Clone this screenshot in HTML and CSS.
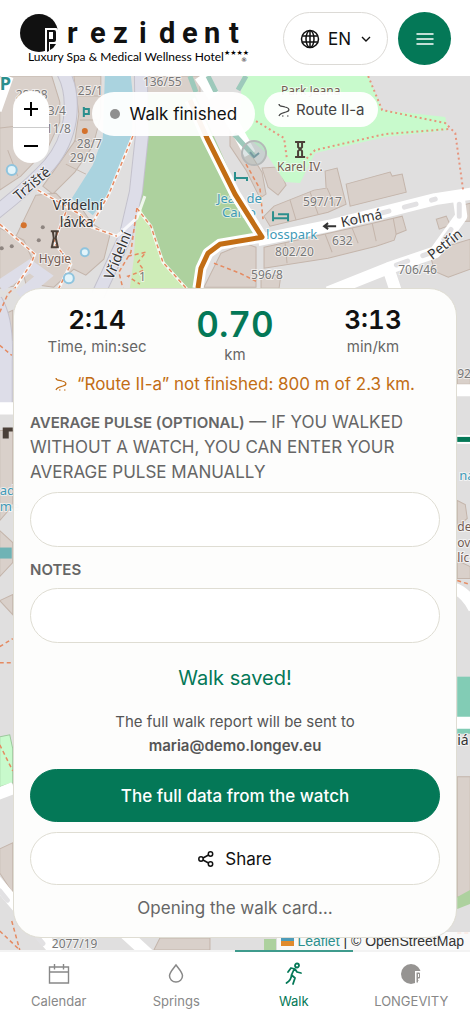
FILE: index.html
```html
<!DOCTYPE html>
<html lang="en">
<head>
    <meta charset="UTF-8">
    <meta name="viewport" content="width=device-width, initial-scale=1.0">
    <title>Prezident - Walk</title>
    <link rel="stylesheet" href="styles.css">
</head>
<body>
    <header class="header">
        <a class="logo" href="#" aria-label="Prezident">
            <svg width="230" height="53" viewBox="0 0 230 53">
                <circle cx="19" cy="21" r="19" fill="#111"/>
                <path d="M25 16h11q2 0 2 2v14h-8v7h-5z" fill="#fff"/>
                <path d="M27 18h7q2 0 2 2v8q0 2-2 2h-5v9l-2 1z" fill="#111"/>
                <path d="M29 20h4v7h-4z" fill="#fff"/>
                <path d="M30 32h6q-2 4-6 6z" fill="#111"/>
                <text class="logo-name" x="47 70 93 119 139 162 184 209" y="31">rezident</text>
                <text class="logo-sub" x="8" y="49">Luxury Spa &amp; Medical Wellness Hotel</text>
                <text class="logo-stars" x="204" y="43">★★★★</text>
                <text class="logo-reg" x="221" y="50">®</text>
            </svg>
        </a>
        <div class="header-actions">
            <button class="lang" type="button">
                <svg width="20" height="20" viewBox="0 0 20 20" fill="none" stroke="#111" stroke-width="1.5">
                    <circle cx="10" cy="10" r="8.5"/>
                    <ellipse cx="10" cy="10" rx="4" ry="8.5"/>
                    <path d="M2.2 7h15.6M2.2 13h15.6M10 1.500v17"/>
                </svg>
                <span>EN</span>
                <svg width="10" height="10" viewBox="0 0 10 10" fill="none" stroke="#111" stroke-width="1.400"><path d="M1 3l4 4 4-4"/></svg>
            </button>
            <button class="menu" type="button" aria-label="Menu">
                <svg width="18" height="14" viewBox="0 0 18 14" stroke="#fff" stroke-width="1.500" stroke-linecap="round"><path d="M1 2h16M1 7h16M1 12h16"/></svg>
            </button>
        </div>
    </header>

    <main class="walk">
        <svg class="map" viewBox="0 76 470 873" preserveAspectRatio="xMidYMin slice" aria-hidden="true">
            <rect x="0" y="76" width="470" height="873" fill="#e0dfdf"/>

            <!-- buildings -->
            <g fill="#d9d0ca" stroke="#c4b5ab" stroke-width="1">
                <path d="M0 76h52l8 26 0 20-12 26-27 28-21 14z"/>
                <path d="M0 128l18-2M18 176l-10-26"/>
                <path d="M74 76h27v40l-8 30-18 26-22 22-10-8 18-25 14-20 4-27z"/>
                <path d="M78 96h22M80 120h18M74 141h20M66 164l20 10M140 76h60v18h-52z"/>
                <path d="M36 195l20-2 12 12 10-2 14 20 18 12-6 24-18 16-12-6-20 18-28-4-6-24-8-14z"/>
                <path d="M0 228l24 12 8 18-18 28-14 2z"/>
                <path d="M142 272l14-6 20 22h-40zM221 253l24-10 11 4v40h-52z"/>
                <path d="M230 130l18 20 14 22 4 22-6 4-14-28-16-24zM262 168l16-1 8 18-8 10-10-8z"/>
                <path d="M264 216l10-10 40-16 12-2-1-17 12-3 9 36-18 8-58 14z"/>
                <path d="M290 200l6 20M310 192l8 22M327 188l8 18"/>
                <path d="M346 184l44-12 2 4 10-2 4 18-56 14z"/>
                <path d="M264 247l60-13 40-9 38-9 4 14-10 4-2 6-12 4-6 2-48 12-64 10z"/>
                <path d="M285 243l2 20M325 234l7 18M352 228l6 15M372 223l4 18M393 218l3 16"/>
                <path d="M436 219l10-3 4 9-11 4zM430 254l20-9 20-6v30l-22 8-14-6zM462 205l8-2v18h-8z"/>
                <path d="M261 278l20-4-2 14h-18z"/>
                <path d="M0 316l13-6v30H0zM0 430h13v75l-13 15z"/>
                <path d="M0 530l13 12v20L0 576zM0 848l13-6v50L0 872z"/>
                <path d="M457 370h13v14h-13zM457 500l8 4 2 14-10 8zM457 560l13 6v12h-13z"/>
                <path d="M457 776h13v120h-13zM0 600l13-6v20zM160 937h50v12h-56z"/>
            </g>

            <!-- greens and water -->
            <path d="M242 76h126l14 34 63 7 3 13-63 7-70 16-15 30-15-1-20-30-26-22z" fill="#c8facc"/>
            <path d="M137 205l16 8 12 40 25 35h-60l4-30z" fill="#ceecb8"/>
            <path d="M148 94h47l43 96 22 45-40 9-14 10-8 34h-10l-22-24-27-60z" fill="#add19e"/>
            <path d="M105 76h26l2 19-1 40-22 57-17 23-21-17 21-33 10-28z" fill="#aad3df"/>
            <path d="M0 736l10-2 3 14v34l-13 4z" fill="#c8facc" stroke="#9cc79c"/>
            <path d="M0 547h12v11H0z" fill="#6fb3b5"/>
            <path d="M457 676h13v57h-13z" fill="#82ccb5"/>
            <path d="M457 896l13-7v14l-13 5zM264 938h12v11h-12z" fill="#add19e"/>

            <!-- pedestrian streets -->
            <g fill="none" stroke="#c3c1cc" stroke-width="14">
                <path d="M62 70q12 20 8 50-4 25-20 44-20 22-56 50"/>
                <path d="M141 76l1 60-6 56-10 43-28 60"/>
                <path d="M-4 300q12 20 10 60v46"/>
            </g>
            <g fill="none" stroke="#dddde8" stroke-width="12">
                <path d="M62 70q12 20 8 50-4 25-20 44-20 22-56 50"/>
                <path d="M141 76l1 60-6 56-10 43-28 60"/>
                <path d="M-4 300q12 20 10 60v46M0 286l30-20 14 10-24 20"/>
            </g>

            <!-- roads -->
            <g fill="none" stroke="#fff" stroke-width="12" stroke-linejoin="round">
                <path d="M258 240l74-15 103-26 40-6M458 194l3 22-26 36-47 16-60 24M388 268l8 24"/>
                <path d="M-4 408h20M454 390h20M454 588q12 4 20 20M454 722h20M-4 794l18-7M-4 880l64 76M125 932l24 22"/>
                <path d="M200 76l14 20M226 110l24 44M8 76l-12 34"/>
            </g>
            <g fill="none" stroke="#e2e1e3" stroke-width="5" stroke-linecap="round" stroke-dasharray="12 16">
                <path d="M350 221l85-22M459 204v14l-24 33-45 16M0 890l46 56"/>
            </g>
            <g fill="none" stroke="#9dc9bb" stroke-width="5"><path d="M190 76l6 16M208 76l8 16M246 76l-8 14M234 134l20 22"/></g>

            <!-- footpaths -->
            <g fill="none" stroke="#fff" stroke-width="3" opacity=".8">
                <path d="M133 136l-24 58-18 32M38 190l42 24 12 13 25 9 20-18 8-22M0 224l35 30-4 10-16 24M66 212l-12 30 17 22-12 24M137 208l14 18 12 36 25 28"/>
            </g>
            <g fill="none" stroke="#e58a61" stroke-width="1.500" stroke-dasharray="4 3">
                <path d="M133 136l-24 58-18 32M38 190l42 24 12 13 25 9M0 224l35 30-4 10-16 24M66 212l-12 30 17 22-12 24M137 208l14 18 12 36 25 28"/>
                <path d="M137 208l-6 44-12 20 4 16M128 256l18-4-8 10 6 8-16 6 12 8M214 263l26 10 16 8M246 164l14 25 3 30"/>
                <path d="M0 312l8-18 6-6M0 345l12 10M0 646l13-8M0 662h13M0 744l13 26M12 920l8 29M0 930l20 19M457 580l13 4M457 932h13"/>
            </g>
            <g fill="none" stroke="#e7957e" stroke-width="2" stroke-dasharray="2 3">
                <path d="M368 76l14 34 63 13 10 10 8 58M448 129l-63 5-70 16-10 10M256 121l28 17 3 22"/>
            </g>

            <!-- points of interest -->
            <g fill="#e3f4fa" stroke="#8fc4de" stroke-width="2"><circle cx="12" cy="170" r="5"/><circle cx="85" cy="252" r="4"/><circle cx="69" cy="278" r="5"/></g>
            <g fill="#d4722c"><circle cx="85" cy="131" r="3"/><circle cx="24" cy="225" r="3"/></g>
            <g fill="#8e8580"><circle cx="43" cy="227" r="2"/><circle cx="39" cy="240" r="2"/><circle cx="12" cy="246" r="2"/><circle cx="2" cy="248" r="2"/></g>
            <g fill="none" stroke="#2b8f8d" stroke-width="2">
                <path d="M84 107v10M84 114h5v-5h-5M273 211v10M273 218h15v3M278 214h10v4M235 172v9M235 178h12v3"/>
            </g>
            <g fill="none" stroke="#4b4038" stroke-width="2">
                <path d="M295 142h10M295 157h10M298 142v5l4 4v6M302 142v5l-4 4v6M51 231h8M51 247h8M53 231l1 7-2 9M57 231l-1 7 2 9"/>
            </g>
            <path d="M3 427h10v4H9v7H3z" fill="#4b4038"/>

            <g class="map-num">
                <text x="16" y="99">28/38</text><text x="48" y="115">3/4</text><text x="46" y="133">11/8</text>
                <text x="78" y="95">25/1</text><text x="77" y="148">28/7</text><text x="70" y="162">29/9</text>
                <text x="143" y="86">136/55</text>
                <text x="303" y="206">597/17</text><text x="332" y="245">632</text><text x="275" y="256">802/20</text>
                <text x="251" y="279">596/8</text><text x="398" y="274">706/46</text><text x="52" y="947">2077/19</text>
                <text x="457" y="378">924</text><text x="139" y="281">1</text>
            </g>
            <g class="map-label">
                <text x="53" y="210">Vřídelní</text><text x="60" y="227">lávka</text>
                <text transform="translate(19 201) rotate(-40)">Tržiště</text>
                <text transform="translate(113 280) rotate(-68)">Vřídelní</text>
                <text transform="translate(342 227) rotate(-12)">Kolmá</text>
                <text transform="translate(432 260) rotate(-38)">Petřín</text>
                <text x="457" y="744">iá</text>
            </g>
            <path d="M324 226h12M328 223l-4 3 4 3" fill="none" stroke="#333" stroke-width="2"/>
            <g class="map-poi">
                <text x="39" y="263">Hygie</text><text x="277" y="171">Karel IV.</text><text x="281" y="95">Park Jeana</text>
                <text x="457" y="530">de</text><text x="457" y="546">ov</text><text x="457" y="561">líc</text>
            </g>
            <g class="map-blue">
                <text x="217" y="203">Jean de</text><text x="222" y="217">Carro</text><text x="266" y="239">losspark</text>
                <text x="459" y="480">na</text><text x="0" y="495">ad</text><text x="0" y="511">me</text>
            </g>
            <text class="map-parking" x="0" y="90">P</text>

            <!-- walked track -->
            <path d="M190 100l17 38 28 56 27 43-42 7-12 9-7 15-3 20" fill="none" stroke="#fff" stroke-width="11" stroke-linejoin="round"/>
            <path d="M190 100l17 38 28 56 27 43-42 7-12 9-7 15-3 20" fill="none" stroke="#c26d14" stroke-width="5" stroke-linejoin="round"/>
            <path d="M457 439h13" stroke="#fff" stroke-width="9"/>
            <path d="M457 439h13" stroke="#047857" stroke-width="5"/>
            <circle cx="254" cy="153" r="12" fill="#9eb5b5" fill-opacity=".35" stroke="#b5b8b8" stroke-width="2"/>
            <path d="M250 152l4 5 5-4" fill="none" stroke="#7899a1" stroke-width="2"/>
        </svg>

        <div class="zoom">
            <button type="button" aria-label="Zoom in"><svg width="16" height="16" viewBox="0 0 16 16" stroke="#000" stroke-width="2"><path d="M1 8h14M8 1v14"/></svg></button>
            <button type="button" aria-label="Zoom out"><svg width="16" height="16" viewBox="0 0 16 16" stroke="#000" stroke-width="2"><path d="M1 8h14"/></svg></button>
        </div>
        <div class="chips">
            <div class="chip chip-state"><span class="dot"></span>Walk finished</div>
            <div class="chip chip-route">
                <svg width="12" height="14" viewBox="0 0 12 14" fill="none" stroke="currentColor" stroke-width="1.200"><path d="M1 1c0 3 3 2 6 3 5 1 5 4 1 5-3 1-6 1-7 4M4 13h1.500M9 13h1.500"/></svg>
                Route II-a
            </div>
        </div>
        <div class="attribution">
            <svg width="13" height="8" viewBox="0 0 13 8"><path fill="#4c9bb8" d="M0 0h13v4H0z"/><path fill="#e08a2c" d="M0 3h13v5H0z"/></svg>
            <a href="#">Leaflet</a> | © OpenStreetMap
        </div>

        <section class="card">
            <div class="stats">
                <div class="stat"><strong>2:14</strong><span>Time, min:sec</span></div>
                <div class="stat stat-main"><strong>0.70</strong><span>km</span></div>
                <div class="stat"><strong>3:13</strong><span>min/km</span></div>
            </div>
            <p class="warning">
                <svg width="12" height="14" viewBox="0 0 12 14" fill="none" stroke="currentColor" stroke-width="1.200"><path d="M1 1c0 3 3 2 6 3 5 1 5 4 1 5-3 1-6 1-7 4M4 13h1.500M9 13h1.500"/></svg>
                “Route II-a” not finished: 800 m of 2.3 km.
            </p>
            <form class="form">
                <label for="pulse"><b>Average pulse (optional)</b> — if you walked without a watch, you can enter your average pulse manually</label>
                <input type="text" id="pulse" inputmode="numeric">
                <label for="notes" class="label-notes"><b>Notes</b></label>
                <input type="text" id="notes">
            </form>
            <p class="saved">Walk saved!</p>
            <p class="report">The full walk report will be sent to<br><b>maria@demo.longev.eu</b></p>
            <button class="btn btn-primary" type="button">The full data from the watch</button>
            <button class="btn" type="button">
                <svg width="16" height="16" viewBox="0 0 16 16" fill="none" stroke="#111" stroke-width="1.500"><circle cx="3" cy="8" r="2.200"/><circle cx="12.500" cy="3" r="2.200"/><circle cx="12.500" cy="13" r="2.200"/><path d="M5 7l5.500-3M5 9l5.500 3"/></svg>
                Share
            </button>
            <p class="opening">Opening the walk card…</p>
        </section>
    </main>

    <nav class="tabs">
        <a href="#">
            <svg width="24" height="24" viewBox="0 0 24 24" fill="none" stroke="currentColor" stroke-width="1.400"><path d="M2.500 5h19v16h-19zM2.500 10h19M7.500 2v5.500M16.500 2v5.500"/></svg>
            Calendar
        </a>
        <a href="#">
            <svg width="24" height="24" viewBox="0 0 24 24" fill="none" stroke="currentColor" stroke-width="1.500"><path d="M12 3c-3 4-6.500 7.500-6.500 10.800a6.500 6.200 0 0 0 13 0C18.500 10.500 15 7 12 3z"/></svg>
            Springs
        </a>
        <a class="active" href="#">
            <svg width="24" height="24" viewBox="0 0 24 24" fill="none" stroke="currentColor" stroke-width="1.800" stroke-linecap="round" stroke-linejoin="round"><circle cx="15" cy="3.500" r="2"/><path d="M6 10l3-4 4 1 2 3 4 1M12 7.500L9.500 13l3.500 3-2 6M9.500 13c0 3-2 6-5 8"/></svg>
            Walk
        </a>
        <a href="#">
            <svg width="24" height="24" viewBox="0 0 24 24"><circle cx="12" cy="12" r="10" fill="#969492"/><path d="M16 9h6v9h-3v5h-3z" fill="#fff"/><path d="M17.500 10.500H20q1 0 1 1v4q0 1-1 1h-1v4h-1.500z" fill="#969492"/><path d="M19 12h1v3h-1z" fill="#fff"/></svg>
            LONGEVITY
        </a>
    </nav>
</body>
</html>
```
FILE: styles.css
```css
* {
    box-sizing: border-box;
}
body {
    font-family: Inter, sans-serif;
    background-color: #fff;
    color: #111;
    margin: 0;
    display: flex;
    flex-direction: column;
    min-height: 100vh;
}
button {
    font-family: inherit;
    color: inherit;
    padding: 0;
    border: none;
    cursor: pointer;
}
a {
    text-decoration: none;
}
p {
    margin: 0;
}
.header {
    display: flex;
    justify-content: space-between;
    align-items: center;
    padding: 12px 19px 11px 20px;
}
.logo svg {
    display: block;
}
.logo-name {
    font: 700 29px Roboto, sans-serif;
    fill: #111;
}
.logo-sub {
    font: 12px Lato, sans-serif;
}
.logo-stars {
    font: 7px "DejaVu Sans", sans-serif;
}
.logo-reg {
    font: 6px "DejaVu Sans", sans-serif;
}
.header-actions {
    display: flex;
    gap: 10px;
}
.lang {
    display: flex;
    align-items: center;
    justify-content: center;
    gap: 8px;
    width: 105px;
    height: 53px;
    font-size: 17px;
    background: #fff;
    border: 1px solid #dcdad6;
    border-radius: 27px;
}
.lang span {
    margin-right: 2px;
}
.menu {
    display: flex;
    align-items: center;
    justify-content: center;
    width: 53px;
    height: 53px;
    background-color: #047857;
    border-radius: 50%;
}

/* map */
.walk {
    position: relative;
    flex: 1;
    overflow: hidden;
    padding: 212px 13px 12px;
}
.map {
    position: absolute;
    top: 0;
    left: 0;
    width: 100%;
    height: 100%;
}
.map text {
    font-family: "Noto Sans", sans-serif;
    stroke: rgba(255, 255, 255, 0.6);
    stroke-width: 2px;
    paint-order: stroke;
}
.map-num {
    font-size: 12px;
    fill: #777;
}
.map-label {
    font-size: 14px;
    fill: #333;
}
.map-poi {
    font-size: 12px;
    fill: #735c52;
}
.map-blue {
    font-size: 13px;
    fill: #3f9ab8;
}
.map-parking {
    font-size: 18px;
    font-weight: 700;
    fill: #2b8f8d;
}
.zoom {
    position: absolute;
    top: 15px;
    left: 13px;
    display: flex;
    flex-direction: column;
    width: 36px;
    overflow: hidden;
    border-radius: 18px;
}
.zoom button {
    display: flex;
    align-items: center;
    justify-content: center;
    height: 36px;
    background: #fff;
}
.zoom button + button {
    border-top: 1px solid #ccc;
}
.chips {
    position: absolute;
    top: 16px;
    left: 0;
    right: 0;
    display: flex;
    align-items: flex-start;
    justify-content: center;
    gap: 9px;
}
.chip {
    display: flex;
    align-items: center;
    background: rgba(255, 255, 255, 0.94);
    border-radius: 22px;
}
.chip-state {
    height: 44px;
    padding: 0 18px;
    gap: 10px;
    font-size: 17px;
}
.chip-route {
    height: 35px;
    padding: 0 14px;
    gap: 6px;
    font-size: 15px;
    color: #444;
}
.dot {
    width: 10px;
    height: 10px;
    background: #8f8f8f;
    border-radius: 50%;
}
.attribution {
    position: absolute;
    right: 0;
    bottom: 0;
    padding: 0 6px 0 4px;
    background: rgba(255, 255, 255, 0.8);
    font: 14px/18px "Liberation Sans", sans-serif;
    color: #333;
}
.attribution a {
    color: #2b8f8d;
}

/* result card */
.card {
    position: relative;
    padding: 13px 16px 16px;
    background: rgba(253, 253, 252, 0.98);
    border: 1px solid #dfddd3;
    border-radius: 28px;
    color: #666;
    text-align: center;
}
.stats {
    display: grid;
    grid-template-columns: repeat(3, 1fr);
    gap: 4px;
}
.stat {
    display: flex;
    flex-direction: column;
    font-size: 15px;
    line-height: 18px;
}
.stat strong {
    font-size: 26px;
    font-weight: 600;
    line-height: 36px;
    font-variant-numeric: tabular-nums;
    color: #111;
}
.stat-main strong {
    font-size: 35px;
    line-height: 44px;
    color: #047857;
}
.warning {
    display: flex;
    align-items: center;
    justify-content: center;
    gap: 10px;
    margin-top: 7px;
    font-size: 17px;
    line-height: 26px;
    color: #c26d14;
}
.form {
    display: flex;
    flex-direction: column;
    text-align: left;
}
.form label {
    margin: 13px 0 7px;
    font-size: 17px;
    line-height: 25px;
    text-transform: uppercase;
}
.form label b {
    font-size: 15px;
    font-weight: 600;
}
.form .label-notes {
    margin: 10px 0 6px;
}
.form input {
    width: 100%;
    height: 55px;
    padding: 0 20px;
    font: inherit;
    font-size: 17px;
    background: #fff;
    border: 1px solid #dfddd3;
    border-radius: 28px;
}
.saved {
    margin-top: 21px;
    font-size: 20px;
    line-height: 28px;
    color: #047857;
}
.report {
    margin: 18px 0 11px;
    font-size: 15px;
    line-height: 24px;
    color: #555;
}
.report b {
    font-weight: 600;
}
.btn {
    display: flex;
    align-items: center;
    justify-content: center;
    gap: 11px;
    width: 100%;
    height: 53px;
    margin-bottom: 10px;
    font-size: 17px;
    color: #111;
    background: #fff;
    border: 1px solid #dfddd3;
    border-radius: 27px;
}
.btn-primary {
    font-weight: 500;
    color: #fff;
    background: #047857;
    border-color: #047857;
}
.opening {
    font-size: 17px;
    line-height: 26px;
}

/* bottom navigation */
.tabs {
    display: grid;
    grid-template-columns: repeat(4, 1fr);
}
.tabs a {
    display: flex;
    flex-direction: column;
    align-items: center;
    gap: 6px;
    padding: 10px 0 8px;
    border-top: 2px solid #f3f3f3;
    font-size: 13px;
    line-height: 18px;
    color: #888;
}
.tabs a.active {
    border-top-color: #3f9b8d;
    color: #047857;
}
```
